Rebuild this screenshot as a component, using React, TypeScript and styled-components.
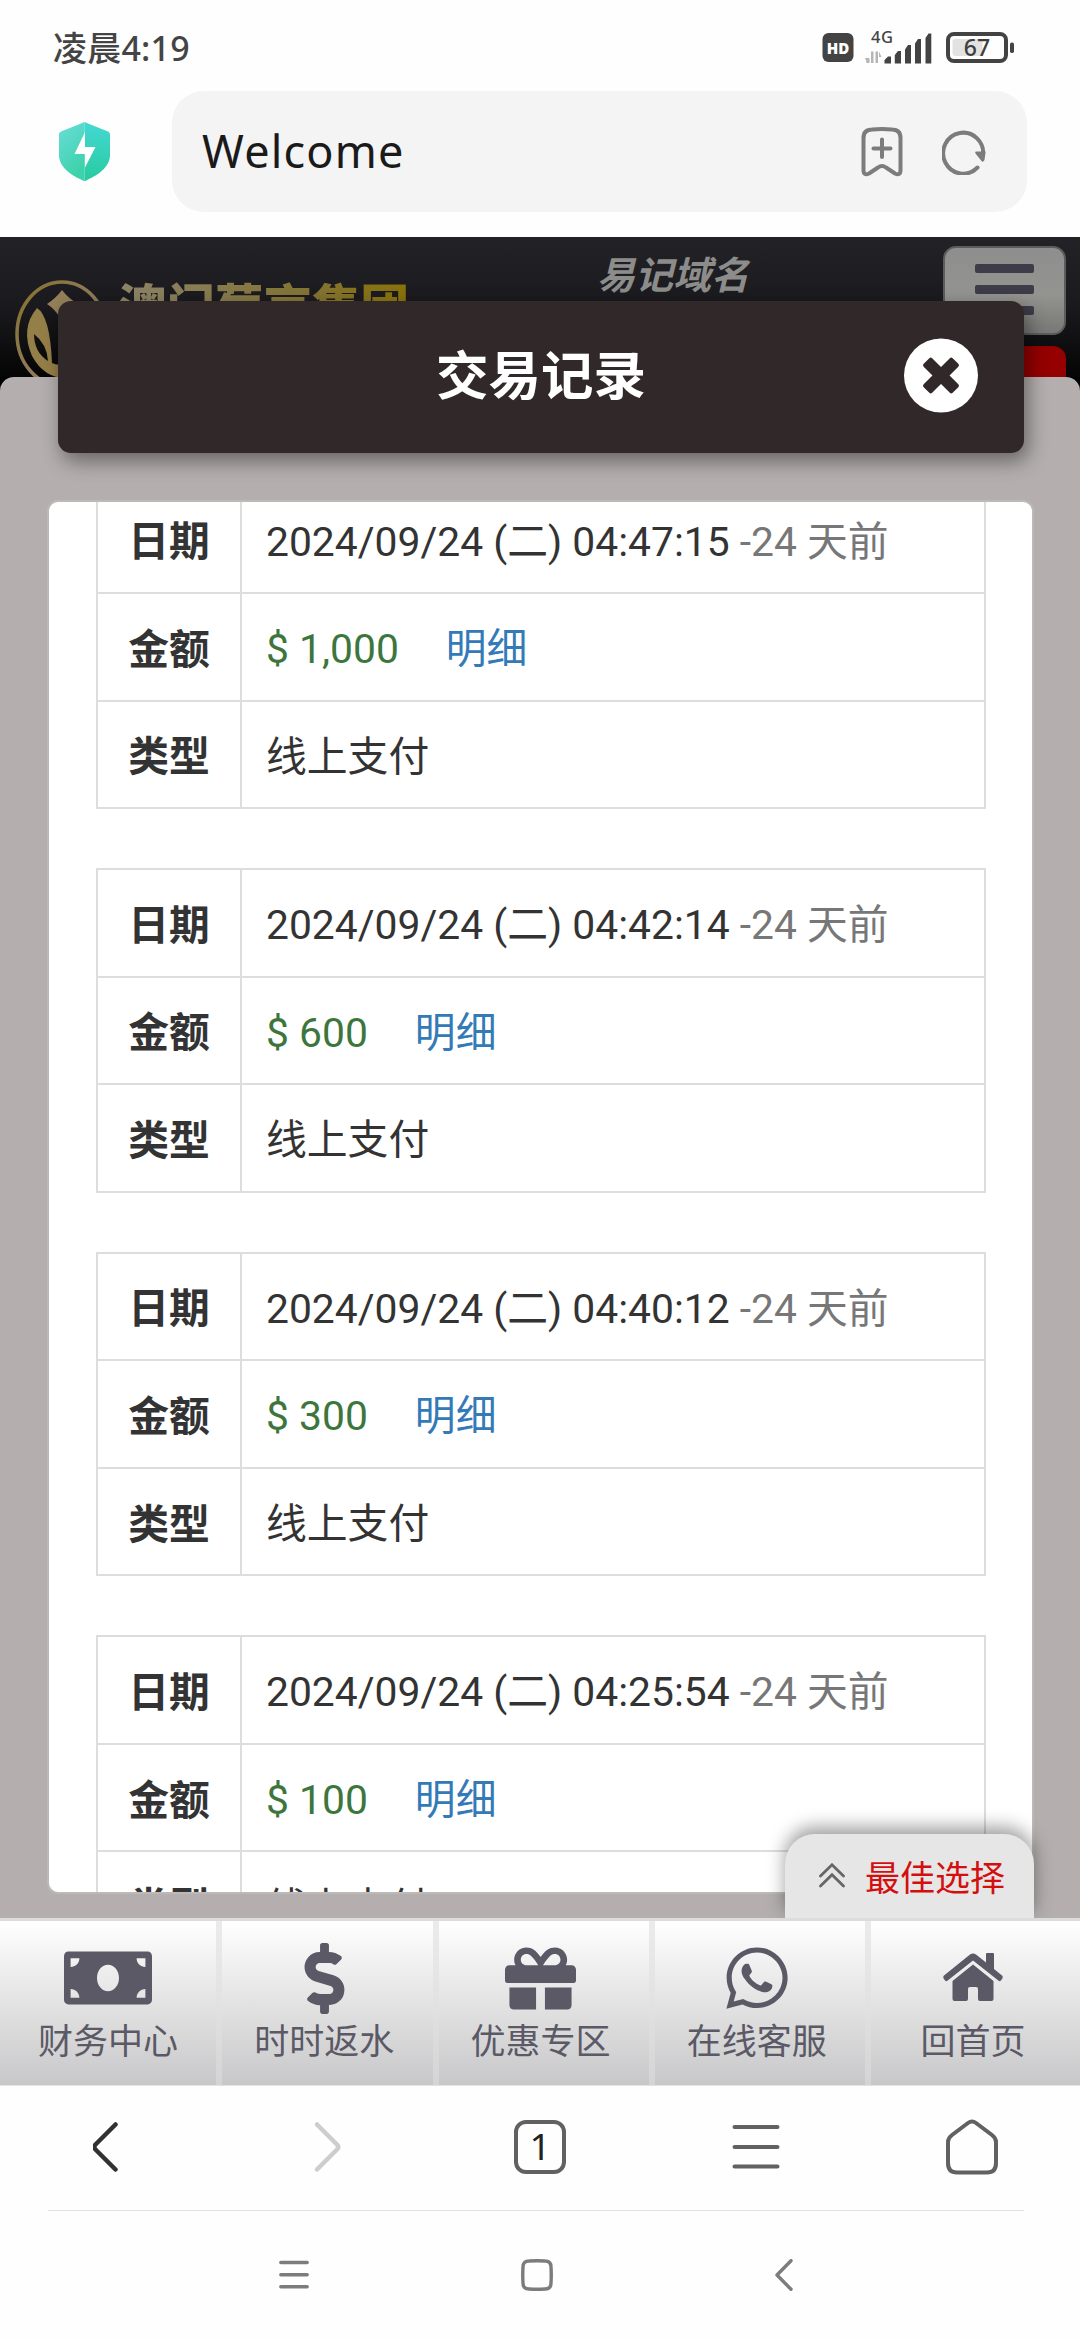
import React from "react";
import styled, { createGlobalStyle, css } from "styled-components";
import { FaDollarSign, FaGift, FaMoneyBill, FaWhatsapp } from "react-icons/fa";

const GlobalStyle = createGlobalStyle`
  * { box-sizing: border-box; }
  body {
    margin: 0;
    background: #fefefe;
    font-family: Roboto, "Noto Sans CJK SC", sans-serif;
    -webkit-font-smoothing: antialiased;
  }
`;

const Phone = styled.div`
  width: 1080px;
  height: 2340px;
  display: flex;
  flex-direction: column;
  overflow: hidden;
  background: #fefefe;
`;

/* ---------- system status bar ---------- */

const StatusBar = styled.div`
  height: 91px;
  padding: 4px 66px 0 53px;
  display: flex;
  align-items: center;
  justify-content: space-between;
`;

const Clock = styled.div`
  font: 500 34px/40px "Noto Sans", "Noto Sans CJK SC", sans-serif;
  letter-spacing: 0.2px;
  color: #444;
`;

const StatusIcons = styled.svg`
  width: 192px;
  height: 36px;
  display: block;
`;

/* ---------- browser address bar ---------- */

const AddressRow = styled.div`
  height: 146px;
  padding: 0 53px 25px 59px;
  display: flex;
  align-items: center;
  gap: 62px;
`;

const AddressBox = styled.div`
  flex: 1;
  height: 121px;
  border-radius: 32px;
  background: #f4f4f4;
  padding: 0 41px 0 30px;
  display: flex;
  align-items: center;
`;

const PageTitle = styled.div`
  flex: 1;
  font: 400 45px/60px "Noto Sans", sans-serif;
  letter-spacing: 1.2px;
  padding-bottom: 1px;
  color: #1a1a1a;
`;

const AddressActions = styled.div`
  display: flex;
  align-items: center;
  gap: 39px;
`;

/* ---------- website ---------- */

const Site = styled.div`
  height: 1849px;
  display: flex;
  flex-direction: column;
  background: #000;
`;

const SiteHeader = styled.div`
  height: 140px;
  flex: none;
  padding: 0 14px;
  display: flex;
  align-items: flex-start;
  background: linear-gradient(#232226 0, #1a191d 50%, #050505 100%);
`;

const LogoMark = styled.svg`
  width: 95px;
  height: 108px;
  margin-top: 43px;
  flex: none;
`;

const Brand = styled.div`
  margin: 38px 0 0 9px;
  width: 292px;
  font: 900 48.5px/58px "Noto Sans CJK SC", sans-serif;
  white-space: nowrap;
  color: transparent;
  background: linear-gradient(90deg, #8b8468, #837334 65%, #8a7208);
  background-clip: text;
  -webkit-background-clip: text;
`;

const DomainHint = styled.div`
  margin: 13px 0 0 187px;
  flex: 1;
  font: italic 700 38px/46px "Noto Sans CJK SC", sans-serif;
  color: #8c8c8b;
`;

const HeaderActions = styled.div`
  width: 123px;
  padding-top: 9px;
  display: flex;
  flex-direction: column;
  gap: 11px;
`;

const MenuButton = styled.div`
  height: 89px;
  border: 2px solid #5c5c5e;
  border-radius: 13px;
  padding: 16px 30px;
  display: flex;
  flex-direction: column;
  gap: 12px;
  background: linear-gradient(#8e8e8e, #93938f 55%, #787876);
`;

const MenuBar = styled.div`
  height: 9px;
  border-radius: 2px;
  background: #3d3c48;
`;

const RedButton = styled.div`
  height: 31px;
  border-radius: 13px 13px 0 0;
  background: #950000;
`;

const Sheet = styled.div`
  flex: 1;
  min-height: 0;
  border-radius: 14px 14px 0 0;
  background: #b4aeae;
  padding: 0 46px 24px 47px;
  display: flex;
  flex-direction: column;
`;

const TitleBar = styled.div`
  position: relative;
  z-index: 1;
  flex: none;
  height: 152px;
  margin: -76px 10px 47px 11px;
  padding: 0 46px 3px 120px;
  border-radius: 13px;
  background: #312829;
  box-shadow: 4px 8px 20px rgba(0, 0, 0, 0.42);
  display: flex;
  align-items: center;
`;

const Title = styled.div`
  flex: 1;
  text-align: center;
  font: 700 52.5px/60px "Noto Sans CJK SC", sans-serif;
  color: #fff;
  padding-bottom: 8px;
`;

const Card = styled.div`
  flex: 1;
  min-height: 0;
  border: 2px solid #bcbab9;
  border-radius: 11px;
  background: #fff;
  overflow: hidden;
  padding: 0 46px 0 47px;
`;

const RecordList = styled.div`
  margin-top: -17.6px;
  display: flex;
  flex-direction: column;
  gap: 58.8px;
`;

const Record = styled.div`
  flex: none;
  border: solid #ddd;
  border-width: 2px 2px 0;
`;

const RecordRow = styled.div`
  height: 107.6px;
  border-bottom: 2px solid #ddd;
  display: grid;
  grid-template-columns: 144px 1fr;
`;

const RowLabel = styled.div`
  border-right: 2px solid #ddd;
  display: flex;
  align-items: center;
  justify-content: center;
  font: 700 40.8px/58px "Noto Sans CJK SC", sans-serif;
  color: #333;
`;

const RowValue = styled.div`
  padding: 5px 0 0 24px;
  font-size: 40.8px;
  line-height: 58px;
  color: #333;
  display: flex;
  align-items: center;
  white-space: pre;
`;

const Ago = styled.span`
  color: #777;
`;

const Amount = styled.span`
  color: #3c763d;
`;

const DetailLink = styled.a`
  margin-left: 47px;
  color: #337ab7;
`;

/* ---------- website bottom navigation ---------- */

const SiteNav = styled.div`
  position: relative;
  flex: none;
  height: 168px;
  border-top: 3px solid #dcdcdc;
  border-bottom: 1px solid #e2e2e2;
  display: grid;
  grid-template-columns: repeat(5, 216.25px);
  background: linear-gradient(#fff, #ebebeb 35%, #c8c8ca);
`;

const NavItem = styled.div<{ $divided: boolean }>`
  display: flex;
  flex-direction: column;
  align-items: center;
  ${(p) =>
    p.$divided &&
    css`
      background: linear-gradient(#ebebeb, #e2e2e2 50%, #d4d4d4) 0 0 / 6px 100% no-repeat;
    `}
`;

const NavIcon = styled.div`
  height: 93px;
  padding-top: 21px;
  display: flex;
  align-items: center;
  color: #5b5966;
`;

const NavLabel = styled.div`
  font: 400 35px/50px "Noto Sans CJK SC", sans-serif;
  color: #5b5966;
`;

const BestPick = styled.div`
  position: absolute;
  right: 46px;
  bottom: 100%;
  margin-bottom: 3px;
  width: 249px;
  height: 84px;
  border-radius: 30px 30px 0 0;
  background: #e6e6e6;
  box-shadow: 0 -7px 18px rgba(0, 0, 0, 0.38);
  clip-path: inset(-40px -40px 0 -40px);
  padding: 0 29px 0 34px;
  display: flex;
  align-items: center;
  justify-content: space-between;
  font: 400 35px/50px "Noto Sans CJK SC", sans-serif;
  color: #d3100f;
`;

/* ---------- browser toolbar and system keys ---------- */

const Toolbar = styled.div`
  height: 125px;
  flex: none;
  margin: 0 56px 0 48px;
  padding: 0 0 3px;
  border-bottom: 1px solid #e2e2e2;
`;

const ToolbarItems = styled.div`
  height: 100%;
  margin: 0 -56px 0 -48px;
  display: grid;
  grid-template-columns: repeat(5, 1fr);
  align-items: center;
  justify-items: center;
`;

const TabCount = styled.div`
  width: 52px;
  height: 54px;
  border: 4px solid #616161;
  border-radius: 12px;
  font: 400 37px/43px "Noto Sans", sans-serif;
  text-align: center;
  color: #222;
`;

const SystemKeys = styled.div`
  flex: 1;
  padding: 0 286px 2px 279px;
  display: flex;
  align-items: center;
`;

const RecentKey = styled.svg`
  width: 30px;
  height: 32px;
  margin-right: 212px;
`;

const HomeKey = styled.svg`
  width: 32px;
  height: 32px;
  margin-right: 222px;
`;

type Entry = { time: string; amount: string };

const entries: Entry[] = [
  { time: "04:47:15", amount: "1,000" },
  { time: "04:42:14", amount: "600" },
  { time: "04:40:12", amount: "300" },
  { time: "04:25:54", amount: "100" },
];

const HouseIcon = () => (
  <svg width="60" height="50" viewBox="0 0 60 50" fill="currentColor">
    <path d="M27 1.6Q30 -.6 33 1.6L43 9.6V1Q43 0 44 0H50Q51 0 51 1V16L59 22.6Q60.300 24 59.300 25.500L58 27.500Q56.800 28.800 55.300 27.600L30 7.600L4.700 27.600Q3.200 28.800 2 27.500L.7 25.500Q-.3 24 1 22.600Z" />
    <path d="M30 11.500L50.500 28V46Q50.500 48 48.500 48H37Q35 48 35 46V36Q35 34 33 34H27Q25 34 25 36V46Q25 48 23 48H11.500Q9.500 48 9.500 46V28Z" />
  </svg>
);

const navItems = [
  { label: "财务中心", icon: <FaMoneyBill size={88} /> },
  { label: "时时返水", icon: <FaDollarSign size={71} /> },
  { label: "优惠专区", icon: <FaGift size={71} /> },
  { label: "在线客服", icon: <FaWhatsapp size={70} /> },
  { label: "回首页", icon: <HouseIcon /> },
];

const ShieldIcon = () => (
  <svg width="51" height="59" viewBox="0 0 51 59">
    <defs>
      <linearGradient id="shieldLeft" x1="0" y1="0" x2="0.4" y2="1">
        <stop offset="0" stopColor="#6addda" />
        <stop offset="1" stopColor="#3dd2aa" />
      </linearGradient>
      <linearGradient id="shieldRight" x1="0" y1="0" x2="0" y2="1">
        <stop offset="0" stopColor="#45d8d4" />
        <stop offset="1" stopColor="#27cb9f" />
      </linearGradient>
    </defs>
    <path d="M25.500 0Q24.500 0 22 1.500L2 9.500Q0 10.500 0 12V33C0 45 12 53 22 57.500Q24.500 59 25.500 59Z" fill="url(#shieldLeft)" />
    <path d="M25.500 0Q26.500 0 29 1.500L49 9.500Q51 10.500 51 12V33C51 45 39 53 29 57.500Q26.500 59 25.500 59Z" fill="url(#shieldRight)" />
    <path d="M26 10V25H36.500L26 45.500V32H15.500Z" fill="#fff" />
  </svg>
);

const BookmarkIcon = () => (
  <svg width="42" height="50" viewBox="0 0 42 50" fill="none" stroke="#7c7c7c" strokeWidth="4" strokeLinecap="round" strokeLinejoin="round">
    <path d="M2.500 11Q2.500 2.500 11 2.500Q21 1.500 31 2.500Q39.500 2.500 39.500 11V43Q39.500 49 34 46.500L25 40.500Q21 37.500 17 40.500L8 46.500Q2.500 49 2.500 43Z" />
    <path d="M12.500 21.500H29.500M21 12.500V30" />
  </svg>
);

const ReloadIcon = () => (
  <svg width="44" height="46" viewBox="0 0 44 46">
    <path d="M35.500 38.500A20 20.500 0 1 1 41 27" fill="none" stroke="#7c7c7c" strokeWidth="4" strokeLinecap="round" />
    <path d="M34 22.500H43.500L42.500 31Q41 34 39.500 32L33.500 24.500Q32.500 22.500 34 22.500Z" fill="#7c7c7c" />
  </svg>
);

const App: React.FC = () => (
  <>
    <GlobalStyle />
    <Phone>
      <StatusBar>
        <Clock>凌晨4:19</Clock>
        <StatusIcons viewBox="0 0 192 36" overflow="visible">
          <rect x="0.500" y="3" width="31" height="29" rx="6" fill="#434343" />
          <text x="16" y="23.500" textAnchor="middle" fontFamily="Open Sans, sans-serif" fontWeight="800" fontSize="16.500" textLength="22.500" lengthAdjust="spacingAndGlyphs" fill="#fff">HD</text>
          <text x="49" y="12.500" fontFamily="Noto Sans, sans-serif" fontWeight="500" fontSize="16.500" textLength="22" fill="#444">4G</text>
          <path d="M47.500 21.500V33H44.500L44 30L43 28H47.500ZM49 21.500H51.500V33H49ZM53.500 21.500H56V33H53.500ZM57 21.500L59.500 27H57Z" fill="#b5b5b5" />
          <path d="M62.500 30L66 26.500H69V33.500H62.500ZM72.800 25L76 21H79V33.500H72.800ZM83 19.500L86 15H89V33.500H83ZM93 13.500L96 9H99V33.500H93ZM103.500 8L106.500 3.500H109.300V33.500H103.500Z" fill="#434343" />
          <rect x="126" y="4" width="58" height="27" rx="6" fill="none" stroke="#434343" strokeWidth="4" />
          <rect x="130.500" y="9" width="30" height="17" rx="3" fill="#e2e2e2" />
          <text x="155" y="26" textAnchor="middle" fontFamily="Noto Sans, sans-serif" fontWeight="500" fontSize="23" fill="#3e3e3e">67</text>
          <rect x="188" y="12.500" width="4" height="10.500" rx="1.800" fill="#434343" />
        </StatusIcons>
      </StatusBar>

      <AddressRow>
        <ShieldIcon />
        <AddressBox>
          <PageTitle>Welcome</PageTitle>
          <AddressActions>
            <BookmarkIcon />
            <ReloadIcon />
          </AddressActions>
        </AddressBox>
      </AddressRow>

      <Site>
        <SiteHeader>
          <LogoMark viewBox="0 0 95 108">
            <defs>
              <linearGradient id="ring" x1="0" y1="0" x2="1" y2="1">
                <stop offset="0" stopColor="#85702a" />
                <stop offset="0.500" stopColor="#8f7c5a" />
                <stop offset="1" stopColor="#8a7030" />
              </linearGradient>
            </defs>
            <ellipse cx="48" cy="54" rx="45" ry="52" fill="none" stroke="url(#ring)" strokeWidth="3.500" />
            <path d="M48 10Q54 18 64 24Q54 32 52 54Q48 34 33 24Q42 18 48 10Z" fill="#94815a" />
            <path d="M23 28Q36 36 38 83Q43 86 52 84V98Q30 98 18 76Q6 48 23 28ZM20 54Q20 72 34 81Q33 64 20 54Z" fill="#957f48" />
          </LogoMark>
          <Brand>澳门葡京集团</Brand>
          <DomainHint>易记域名</DomainHint>
          <HeaderActions>
            <MenuButton>
              <MenuBar />
              <MenuBar />
              <MenuBar />
            </MenuButton>
            <RedButton />
          </HeaderActions>
        </SiteHeader>

        <Sheet>
          <TitleBar>
            <Title>交易记录</Title>
            <svg width="74" height="75" viewBox="0 0 74 74">
              <circle cx="37" cy="37" r="37" fill="#fff" />
              <g transform="translate(37 37) rotate(45)" fill="#312829">
                <rect x="-20.500" y="-6" width="41" height="12" rx="2" />
                <rect x="-6" y="-20.500" width="12" height="41" rx="2" />
              </g>
            </svg>
          </TitleBar>
          <Card>
            <RecordList>
              {entries.map((entry) => (
                <Record key={entry.time}>
                  <RecordRow>
                    <RowLabel>日期</RowLabel>
                    <RowValue>
                      2024/09/24 (二) {entry.time} <Ago>-24 天前</Ago>
                    </RowValue>
                  </RecordRow>
                  <RecordRow>
                    <RowLabel>金额</RowLabel>
                    <RowValue>
                      <Amount>$ {entry.amount}</Amount>
                      <DetailLink>明细</DetailLink>
                    </RowValue>
                  </RecordRow>
                  <RecordRow>
                    <RowLabel>类型</RowLabel>
                    <RowValue>线上支付</RowValue>
                  </RecordRow>
                </Record>
              ))}
            </RecordList>
          </Card>
        </Sheet>

        <SiteNav>
          <BestPick>
            <svg width="26" height="26" viewBox="0 0 26 26" fill="none" stroke="#666" strokeWidth="2.800" strokeLinecap="round">
              <path d="M1.500 13L13 1.800L24.500 13M1.500 23L13 11.800L24.500 23" />
            </svg>
            最佳选择
          </BestPick>
          {navItems.map((item, index) => (
            <NavItem key={item.label} $divided={index > 0}>
              <NavIcon>{item.icon}</NavIcon>
              <NavLabel>{item.label}</NavLabel>
            </NavItem>
          ))}
        </SiteNav>
      </Site>

      <Toolbar>
        <ToolbarItems>
          <svg width="30" height="50" viewBox="0 0 30 50" fill="none" stroke="#323232" strokeWidth="4.500" strokeLinecap="round" strokeLinejoin="round">
            <path d="M22.500 2.500L2.500 22.500Q0 25 2.500 27.500L22.500 47.500" />
          </svg>
          <svg width="20" height="50" viewBox="0 0 20 50" fill="none" stroke="#cdcdcd" strokeWidth="4.500" strokeLinecap="round" strokeLinejoin="round" overflow="visible">
            <path d="M3 2.500L23 22.500Q25.500 25 23 27.500L3 47.500" />
          </svg>
          <TabCount>1</TabCount>
          <svg width="48" height="46" viewBox="0 0 48 46" stroke="#616161" strokeWidth="4" strokeLinecap="round">
            <path d="M2.500 3H45.500M2.500 23H45.500M2.500 42.500H45.500" />
          </svg>
          <svg width="54" height="56" viewBox="0 0 54 56" fill="none" stroke="#616161" strokeWidth="4" strokeLinejoin="round">
            <path d="M23 4Q27 1 31 4L47 16Q51 19 51 23V44Q51 53.500 42 53.500H12Q3 53.500 3 44V23Q3 19 7 16Z" />
          </svg>
        </ToolbarItems>
      </Toolbar>

      <SystemKeys>
        <RecentKey viewBox="0 0 30 32" stroke="#7c7c7c" strokeWidth="3.400" strokeLinecap="round">
          <path d="M1.800 3.500H28.200M1.800 15.700H28.200M1.800 27.800H28.200" />
        </RecentKey>
        <HomeKey viewBox="0 0 32 32" fill="none" stroke="#7c7c7c" strokeWidth="3.400">
          <path d="M8 2Q16 1.500 24 2Q30 2 30 8Q30.500 16 30 24Q30 30 24 30Q16 30.500 8 30Q2 30 2 24Q1.500 16 2 8Q2 2 8 2Z" />
        </HomeKey>
        <svg width="18" height="32" viewBox="0 0 18 32" fill="none" stroke="#7c7c7c" strokeWidth="3.400" strokeLinecap="round" strokeLinejoin="round">
          <path d="M16 1.700L2 16L16 30.300" />
        </svg>
      </SystemKeys>
    </Phone>
  </>
);

export default App;
